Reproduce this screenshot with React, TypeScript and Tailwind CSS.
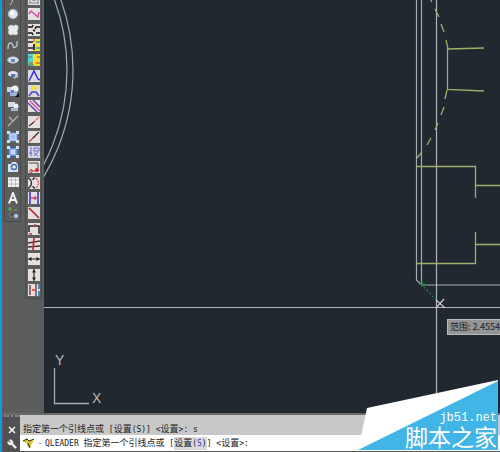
import type { ReactNode } from "react"
import { X, Wrench } from "lucide-react"

type Tool = {
  name: string
  icon: ReactNode
}

const drawTools: Tool[] = [
  { name: "Arc", icon: <path d="M3 12Q5 10 6 6" stroke="#c3cad3" fill="none" /> },
  {
    name: "Circle",
    icon: (
      <>
        <circle cx="6" cy="6" r="4.7" fill="#dfe5f0" stroke="#a9b4c8" />
        <circle cx="5" cy="5" r="2" fill="#fff" />
      </>
    ),
  },
  {
    name: "Revision cloud",
    icon: <path d="M2 2Q4 0 6 2Q9 0 11 2Q12 5 10 7Q12 10 9 11Q6 10 3 11Q0 9 2 6Q0 4 2 2Z" fill="#e6e9ee" stroke="#bcc2cc" strokeWidth="0.6" />,
  },
  {
    name: "Spline",
    icon: <path d="M1 10C1 1 6 4 6 7S11 9 10 2" stroke="#bfc8d6" strokeWidth="1.3" fill="none" />,
  },
  {
    name: "Ellipse",
    icon: (
      <>
        <ellipse cx="6" cy="6" rx="5.5" ry="3.2" fill="#dde3ee" stroke="#a7b3c8" strokeWidth="0.7" />
        <path d="M4 5h4v3H4z" fill="#668cc0" />
      </>
    ),
  },
  {
    name: "Ellipse arc",
    icon: (
      <>
        <ellipse cx="6" cy="5" rx="5" ry="3" fill="#e3e7ef" />
        <path d="M5 5h6v3l-4 2z" fill="#b3bfd2" />
        <path d="M4 5h4v3H4z" fill="#5278b4" />
      </>
    ),
  },
  {
    name: "Insert block",
    icon: (
      <>
        <path d="M0 2h7v5H0z" fill="#ccd5e2" />
        <circle cx="8" cy="4" r="3.5" fill="#f3f5fa" />
        <path d="M3 6h7v5H3z" fill="#9db3d3" />
        <path d="M4 5h3v3H4z" fill="#5f84b9" />
        <path d="M12 8v4H8z" fill="#111" />
      </>
    ),
  },
  {
    name: "Make block",
    icon: (
      <>
        <path d="M1 2h7v5H1z" fill="#d5dbe5" />
        <circle cx="9" cy="6" r="2.5" fill="#edf0f6" />
        <path d="M4 8h7v3H4z" fill="#a3b7d5" />
      </>
    ),
  },
  { name: "Point", icon: <path d="M1 11L11 1M2 2l4 4" stroke="#aeb5bf" strokeWidth="1.2" /> },
  {
    name: "Hatch",
    icon: (
      <>
        <path d="M2 2h8v8H2z" fill="#bdd4f5" stroke="#6d9bdd" />
        <path d="M0 0h3v3H0zM9 0h3v3H9zM0 9h3v3H0zM9 9h3v3H9z" fill="#d7e0ed" />
        <path d="M4 4h4v4H4z" fill="#9cbff5" />
      </>
    ),
  },
  {
    name: "Gradient",
    icon: (
      <>
        <path d="M2 2h8v8H2z" fill="#8fb5f2" stroke="#4277c9" />
        <path d="M0 0h3v3H0zM9 0h3v3H9zM0 9h3v3H0zM9 9h3v3H9z" fill="#d7e0ed" />
        <path d="M4 4h4v4H4z" fill="#c5dafc" />
      </>
    ),
  },
  {
    name: "Region",
    icon: (
      <>
        <path d="M1 3h3l1-2h4l2 3v7H1z" fill="#d6e1f2" />
        <circle cx="7" cy="6" r="2.5" fill="#f3f6fb" stroke="#3f73b9" strokeWidth="1.5" />
      </>
    ),
  },
  {
    name: "Table",
    icon: (
      <>
        <path d="M1 1h11v10H1z" fill="#f4f5f6" />
        <path d="M1 4h11M1 8h11M4.500 1v10M8.500 1v10" stroke="#a3a7ad" strokeWidth="0.7" />
        <path d="M1 1.500h11" stroke="#c5ccd6" />
      </>
    ),
  },
  { name: "Multiline text", icon: <path d="M2 11.500L6 1L10 11.500M3 8h6" stroke="#f5f5f5" strokeWidth="2" fill="none" /> },
  {
    name: "Add selected",
    icon: (
      <>
        <circle cx="3" cy="2" r="1.8" fill="#55ad38" />
        <path d="M7 3h3M3 6v3h3" stroke="#8fa094" />
        <circle cx="9" cy="9" r="2.2" fill="#a5c2ea" />
      </>
    ),
  },
]

const modifyTools: Tool[] = [
  { name: "Grid", icon: <path d="M1 10h10M2 0v10M10 0v10M4 7h4M6 0v8" stroke="#747e87" /> },
  {
    name: "Break line",
    icon: <path d="M1 6l2-3 7 6 1-5" stroke="#d145a8" strokeWidth="1.4" fill="none" />,
  },
  {
    name: "Wall ends",
    icon: <path d="M0 3h4l1-2M12 3H8L7 5M0 9h4l1 2M12 9H8M7 7l-2-1" stroke="#151515" strokeWidth="1.5" fill="none" />,
  },
  {
    name: "Wall match",
    icon: (
      <>
        <path d="M6 0h6v12H6z" fill="#f1df30" />
        <path d="M8 3h4M8 9h4" stroke="#58b08c" strokeWidth="2" />
        <path d="M0 3h5M0 9h5M6 5v6" stroke="#181818" strokeWidth="1.7" />
        <path d="M6 0v3" stroke="#ec9140" strokeWidth="2" />
      </>
    ),
  },
  {
    name: "Wall fill",
    icon: (
      <>
        <path d="M0 0h7v12H0z" fill="#4ed9d5" />
        <path d="M5 0h7v12H5z" fill="#f4df24" />
        <path d="M1 9h4M8 9h4M9 3h3" stroke="#c9742b" strokeWidth="1.5" />
        <path d="M0 3h4M0 11h6" stroke="#66716c" />
      </>
    ),
  },
  {
    name: "Peak",
    icon: (
      <>
        <path d="M0 0h12v12H0z" fill="#dcd9e4" />
        <path d="M1 11L6 1L10 9l2 1" stroke="#302ed0" strokeWidth="1.5" fill="none" />
      </>
    ),
  },
  {
    name: "Highlight",
    icon: (
      <>
        <path d="M0 0h12v12H0z" fill="#dcd9e0" />
        <path d="M3 1h6v4H3z" fill="#ebdf55" />
        <path d="M1 11L4 7h4l3 4" stroke="#4840c5" strokeWidth="1.5" fill="none" />
      </>
    ),
  },
  {
    name: "Hatch lines",
    icon: (
      <>
        <path d="M0 3l9 9M5 0l7 7" stroke="#6c43bb" strokeWidth="1.5" />
        <path d="M2 1l10 10" stroke="#c94583" strokeWidth="1.2" />
      </>
    ),
  },
  {
    name: "Dashed edge",
    icon: (
      <>
        <path d="M1 10L6 6" stroke="#363030" strokeWidth="1.3" />
        <path d="M6 6l5-5" stroke="#e5523a" strokeWidth="1.3" strokeDasharray="2 1" />
      </>
    ),
  },
  {
    name: "Extend",
    icon: (
      <>
        <path d="M1 11L6 6" stroke="#b84c46" strokeWidth="1.3" />
        <path d="M5 7l6-6" stroke="#2f2a2a" strokeWidth="1.3" />
      </>
    ),
  },
  {
    name: "Section",
    icon: (
      <>
        <path d="M0 0h12v12H0z" fill="#d5d2e6" />
        <path d="M3 1v9M1 7h3M6 2h5v3H6zM6 7l4 3M10 6l-4 4" stroke="#736bca" fill="none" />
      </>
    ),
  },
  {
    name: "Corner",
    icon: (
      <>
        <path d="M1 2h9v5" stroke="#4b4040" fill="none" />
        <circle cx="3" cy="10" r="1.4" stroke="#d33b31" fill="none" />
        <circle cx="9" cy="9" r="2" fill="#c9262c" />
        <path d="M3 10h5" stroke="#d33b31" />
      </>
    ),
  },
  {
    name: "Arc pair",
    icon: (
      <>
        <path d="M0 1h1q5 5 0 10H0M7 1q-2 0-2 2M7 11q-2 0-2-2" stroke="#30292a" strokeWidth="1.3" fill="none" />
        <path d="M8 1q5 5 0 10" stroke="#d2545a" strokeWidth="1.4" fill="none" strokeDasharray="2 1" />
      </>
    ),
  },
  {
    name: "Stretch",
    icon: (
      <>
        <path d="M2 0v12M10 0v12" stroke="#4b4cc9" strokeWidth="1.8" />
        <path d="M3 6h6M7 4v4" stroke="#d23f77" strokeWidth="1.3" />
      </>
    ),
  },
  { name: "Diagonal", icon: <path d="M1 1l10 10" stroke="#a9292c" strokeWidth="1.7" /> },
  {
    name: "Offset box",
    icon: (
      <>
        <path d="M1 9V3h10v8" stroke="#242424" strokeWidth="1.5" fill="none" />
        <path d="M7 1v3M1 11h3" stroke="#dc3030" strokeWidth="1.5" />
      </>
    ),
  },
  {
    name: "Trim lines",
    icon: (
      <>
        <path d="M0 5l12-2M0 9l12-1" stroke="#403434" strokeWidth="1.4" />
        <path d="M6 0L5 12" stroke="#dc2323" strokeWidth="1.7" />
      </>
    ),
  },
  { name: "Horizontal arrow", icon: <path d="M0 6h12M1 6l2-1v2zM11 6L9 5v2z" stroke="#222" strokeWidth="1.1" fill="#222" /> },
  { name: "Vertical arrow", icon: <path d="M6 0v12M6 1l1 2H5zM6 11l1-2H5z" stroke="#222" strokeWidth="1.1" fill="#222" /> },
  {
    name: "Move to edge",
    icon: (
      <>
        <path d="M1 0h7v12H1z" fill="#f5d6d6" />
        <path d="M2 1v10M8 0v12" stroke="#3a3030" strokeWidth="1.2" />
        <path d="M4 6h3" stroke="#dd3434" strokeWidth="1.5" />
        <path d="M11 0v5M11 7v5" stroke="#358bd0" strokeWidth="2" />
      </>
    ),
  },
]

function ToolButton({ tool, tile }: { tool: Tool; tile?: boolean }) {
  return (
    <button
      type="button"
      title={tool.name}
      aria-label={tool.name}
      className={`block size-3 shrink-0 ${tile ? "bg-[#e5e0df]" : ""}`}
    >
      <svg viewBox="0 0 12 12" className="size-3">
        {tool.icon}
      </svg>
    </button>
  )
}

function Mono({ children }: { children: ReactNode }) {
  return <span className="font-['DejaVu_Sans_Mono',monospace] text-[8px] whitespace-pre">{children}</span>
}

function Drawing() {
  return (
    <svg viewBox="0 0 456 413" preserveAspectRatio="xMidYMid slice" className="size-full">
      <g fill="none" stroke="#a6abb1" strokeWidth="1.2">
        <circle cx="-180" cy="70" r="203" />
        <circle cx="-180" cy="70" r="209" />
        <path d="M372.500 0V280L377.500 285H456M377.500 0V285" />
        <path d="M392.500 0V413M0 307.500H456" stroke="#b1b5b9" />
      </g>
      <g fill="none" stroke="#9faf69" strokeWidth="1.3">
        <path d="M440 48L403.500 49V89.500L440 91" />
        <path d="M372 166.500H431.500V198M431.500 185.500H456" />
        <path d="M372 263.500H431.500V232M431.500 244.500H456" />
        <path d="M386 -1l2 3M391 9l4 8M397 24l3 8M402 40l2 9M403 90l-2 9M400 107l-3 8M394 123l-3 7M387 138l-4 7M378 152l-5 6" />
      </g>
      <path d="M377 284L394 302" stroke="#248745" strokeWidth="1.3" strokeDasharray="2 2" />
      <path d="M375 284h6M378 281v6" stroke="#248745" />
      <path d="M392 300l9 8M400 299l-8 9" stroke="#c8cccf" strokeWidth="1.2" />
      <path d="M10.500 368V403.500H45" stroke="#a6abb1" fill="none" strokeWidth="1.3" />
      <g fill="#b6babf" fontFamily="Liberation Sans, sans-serif" fontSize="14">
        <text x="11" y="365">Y</text>
        <text x="48" y="403">X</text>
      </g>
    </svg>
  )
}

function CommandLine() {
  return (
    <section className="flex h-9 ml-0.5 text-[9px] text-[#222]">
      <div className="w-4 shrink-0 bg-[#505155] flex flex-col items-center justify-between pt-2 pb-0.5 border-t-2 border-dotted border-[#888b8f]">
        <button type="button" aria-label="Close command line">
          <X className="size-2.5 text-gray-100" strokeWidth={4} />
        </button>
        <button type="button" aria-label="Customize">
          <Wrench className="size-2.5 -scale-x-100 text-gray-100" fill="currentColor" />
        </button>
      </div>
      <div className="flex-1 min-w-0 whitespace-nowrap">
        <p className="h-5 pt-1.5 pl-[3px] bg-[#c8c8c8] leading-4 overflow-hidden">
          指定第一个引线点或<Mono> [</Mono>设置<Mono>(S)] &lt;</Mono>设置<Mono>&gt;: s</Mono>
        </p>
        <div className="h-4 bg-white flex items-center pl-[3px]">
          <svg viewBox="0 0 12 12" className="size-3 shrink-0">
            <path d="M0 4L4 1l2 3 4-2v3L8 8 7 11 4 9V6L1 5z" fill="#d8c62d" />
            <path d="M0 4l4-2 2 2 5-2M5 6l2 5" stroke="#28291b" fill="none" />
          </svg>
          <span className="text-gray-500 w-2.5 text-center">-</span>
          <span>
            <Mono>QLEADER </Mono>
            指定第一个引线点或<Mono> [</Mono>
            <button type="button" className="bg-[#d9d9db] leading-3">
              设置<Mono>(</Mono>
              <span className="text-[#3834d8]">
                <Mono>S</Mono>
              </span>
              <Mono>)</Mono>
            </button>
            <Mono>] &lt;</Mono>设置<Mono>&gt;:</Mono>
          </span>
        </div>
      </div>
    </section>
  )
}

function Watermark() {
  return (
    <div className="absolute right-0 bottom-0 w-[142px] h-[72px] text-white">
      <svg viewBox="0 0 142 72" className="absolute inset-0 size-full">
        <path d="M9 28L140 0V71H0z" fill="#fff" />
        <path d="M0 70L140 1V70z" fill="#41b5e6" />
      </svg>
      <div className="relative flex flex-col items-end pt-8 pr-[3px]">
        <span className="font-['Liberation_Mono',monospace] text-[12px] leading-3">jb51.net</span>
        <span className="font-['Liberation_Sans','Noto_Sans_CJK_SC',sans-serif] text-[23px] leading-7">脚本之家</span>
      </div>
    </div>
  )
}

export default function App() {
  return (
    <main className="relative h-screen overflow-hidden flex flex-col bg-[#555657] border-l-2 border-[#109bd9] font-['Noto_Sans_CJK_SC',sans-serif]">
      <div className="flex flex-1 min-h-0">
        <aside className="w-[42px] shrink-0 flex items-start gap-1 pl-0.5 bg-[#5c5d5d]">
          <nav
            aria-label="Draw"
            className="-mt-2 h-[230px] w-[17px] flex flex-col items-center justify-between pb-0.5 border border-[#484949]"
          >
            {drawTools.map((tool) => (
              <ToolButton key={tool.name} tool={tool} />
            ))}
          </nav>
          <nav
            aria-label="Modify"
            className="-mt-2 h-[307px] w-[17px] flex flex-col items-center justify-between pb-0.5 border border-[#484949]"
          >
            {modifyTools.map((tool) => (
              <ToolButton key={tool.name} tool={tool} tile />
            ))}
          </nav>
        </aside>
        <div className="relative flex-1 min-w-0 bg-[#212830]">
          <Drawing />
          <div className="absolute left-[403px] top-[319px] w-16 h-4 pl-0.5 bg-[#929496] border border-[#b8babb] text-[9px] leading-[14px] text-[#202020] whitespace-nowrap">
            范围: 2.4554
          </div>
        </div>
      </div>
      <div className="border-t-2 border-[#68696b] pb-px">
        <CommandLine />
      </div>
      <Watermark />
    </main>
  )
}
